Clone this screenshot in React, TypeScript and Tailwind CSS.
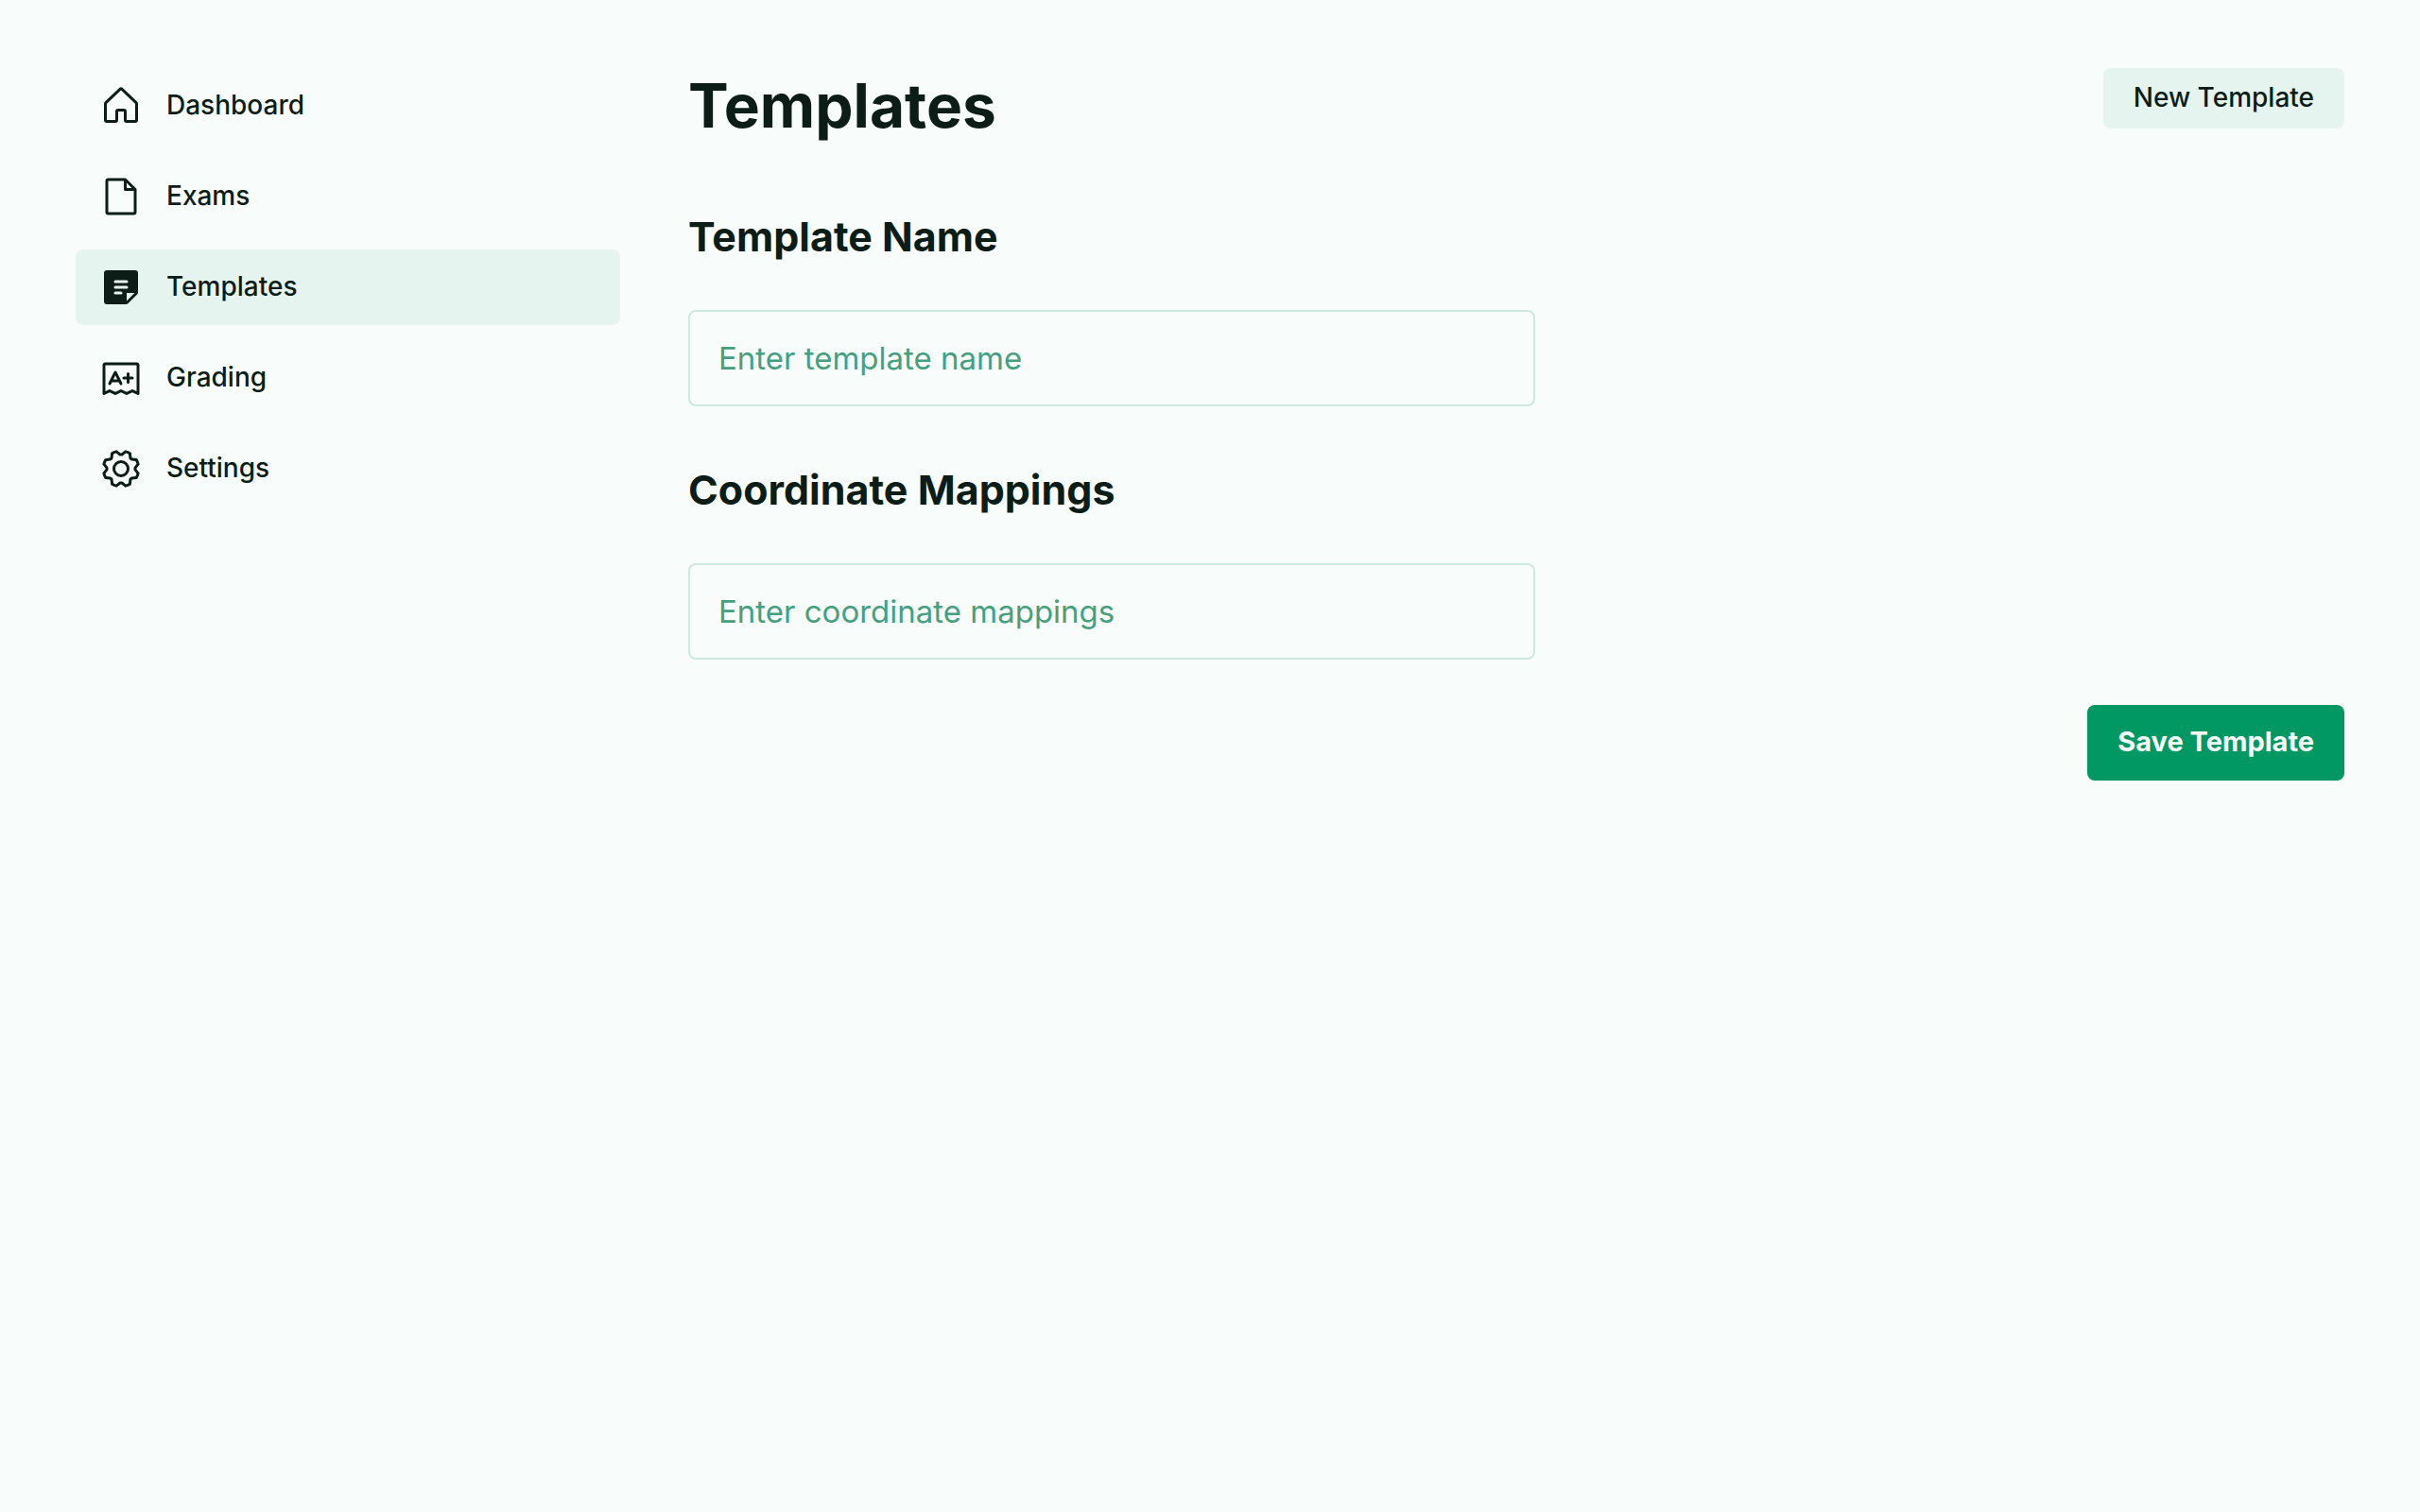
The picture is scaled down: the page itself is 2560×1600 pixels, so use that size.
import type { ReactNode } from "react";
import { PiExam, PiFile, PiGear, PiNoteFill } from "react-icons/pi";

function HouseIcon() {
  return (
    <svg viewBox="0 0 256 256" fill="currentColor" className="size-12" aria-hidden="true">
      <path d="M218.83,103.77l-80-75.48a1.14,1.14,0,0,1-.11-.11,16,16,0,0,0-21.53,0l-.11.11L37.17,103.77A16,16,0,0,0,32,115.55V208a16,16,0,0,0,16,16H96a16,16,0,0,0,16-16V160h32v48a16,16,0,0,0,16,16h48a16,16,0,0,0,16-16V115.55A16,16,0,0,0,218.83,103.77ZM208,208H160V160a16,16,0,0,0-16-16H112a16,16,0,0,0-16,16v48H48V115.55l.11-.1L128,40l79.9,75.43.11.1Z" />
    </svg>
  );
}

type NavItem = { label: string; icon: ReactNode; active?: boolean };

const navItems: NavItem[] = [
  { label: "Dashboard", icon: <HouseIcon /> },
  { label: "Exams", icon: <PiFile className="size-12" aria-hidden="true" /> },
  { label: "Templates", icon: <PiNoteFill className="size-12" aria-hidden="true" />, active: true },
  { label: "Grading", icon: <PiExam className="size-12" aria-hidden="true" /> },
  { label: "Settings", icon: <PiGear className="size-12" aria-hidden="true" /> },
];

function Field({ id, title, placeholder }: { id: string; title: string; placeholder: string }) {
  return (
    <div className="flex flex-col gap-13">
      <h2 className="text-[43px] leading-13 font-bold">
        <label htmlFor={id}>{title}</label>
      </h2>
      <input
        id={id}
        type="text"
        placeholder={placeholder}
        className="w-full max-w-4xl rounded-lg border-2 border-[#cde9df] bg-[#f8fcfa] px-[30px] py-[29px] text-[33px] leading-10 outline-none placeholder:text-[#46a080] focus:border-[#46a080]"
      />
    </div>
  );
}

export default function App() {
  return (
    <div className="flex min-h-screen gap-2 bg-[#f8fcfa] px-12 py-10 font-['Inter',sans-serif] text-[#0c1c17]">
      <nav aria-label="Main" className="w-160 shrink-0 p-8">
        <ul className="flex flex-col gap-4">
          {navItems.map((item) => (
            <li key={item.label}>
              <a
                href="#"
                aria-current={item.active ? "page" : undefined}
                className={`flex h-20 items-center gap-6 rounded-lg px-6 text-[28px] leading-10 font-medium ${item.active ? "bg-[#e6f4ef]" : ""}`}
              >
                {item.icon}
                <span className="pb-0.5">{item.label}</span>
              </a>
            </li>
          ))}
        </ul>
      </nav>
      <main className="min-w-0 flex-1 p-8">
        <header className="flex items-start justify-between gap-6">
          <h1 className="text-[64px] leading-20 font-bold">Templates</h1>
          <button type="button" className="h-16 rounded-lg bg-[#e6f4ef] px-8 pb-0.5 text-[28px] leading-10 font-medium">
            New Template
          </button>
        </header>
        <form className="mt-18 flex flex-col gap-12">
          <div className="flex flex-col gap-[62px]">
            <Field id="template-name" title="Template Name" placeholder="Enter template name" />
            <Field id="coordinate-mappings" title="Coordinate Mappings" placeholder="Enter coordinate mappings" />
          </div>
          <div className="flex justify-end">
            <button type="submit" className="h-20 rounded-lg bg-[#019863] px-8 pb-0.5 text-[29px] leading-10 font-bold text-[#f8fcfa]">
              Save Template
            </button>
          </div>
        </form>
      </main>
    </div>
  );
}
